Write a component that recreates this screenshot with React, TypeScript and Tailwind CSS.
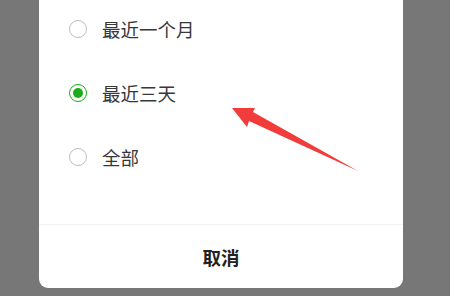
const options = [
  { label: "最近一个月", checked: false },
  { label: "最近三天", checked: true },
  { label: "全部", checked: false },
]

function Radio({ checked }: { checked: boolean }) {
  if (checked) {
    return (
      <span className="flex h-[18px] w-[18px] items-center justify-center rounded-full border-[1.5px] border-[#1aad19]">
        <span className="h-[10px] w-[10px] rounded-full bg-[#1aad19]" />
      </span>
    )
  }
  return <span className="h-[18px] w-[18px] rounded-full border-[1.2px] border-[#bdbdbd]" />
}

export default function App() {
  return (
    <div
      className="relative h-[296px] w-[450px] overflow-hidden bg-[#777777]"
      style={{ fontFamily: '"Noto Sans CJK SC", "Noto Sans", sans-serif' }}
    >
      <div className="ml-[39px] w-[364px] rounded-b-[9px] bg-white">
        <div className="-mt-[3px]">
          {options.map((o) => (
            <div key={o.label} className="flex h-[64px] items-center pl-[30px]">
              <Radio checked={o.checked} />
              <span className="ml-[15px] text-[18.5px] leading-none text-[#383838]">{o.label}</span>
            </div>
          ))}
        </div>
        <div className="h-[35px]" />
        <div className="h-px bg-[#f3f3f3]" />
        <div className="flex h-[63px] items-center justify-center pt-[2px]">
          <span className="text-[18.5px] font-bold leading-none text-[#222222]">取消</span>
        </div>
      </div>

      {/* red arrow annotation */}
      <svg className="absolute left-0 top-0" width="450" height="296" viewBox="0 0 450 296">
        <polygon points="232,108 255,108 253,112 358,171 249,121 247,127" fill="#f23b3b" />
      </svg>
    </div>
  )
}
